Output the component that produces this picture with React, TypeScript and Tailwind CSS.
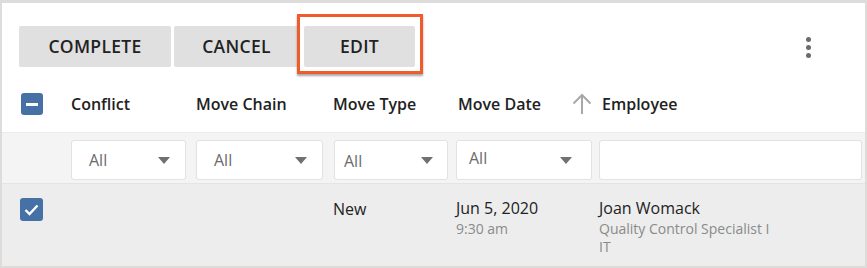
import React from 'react';

const Caret = () => (
  <svg width="12" height="7" viewBox="0 0 12 7" className="shrink-0">
    <path d="M0 0 L12 0 L6 7 Z" fill="#707070" />
  </svg>
);

const FilterSelect = ({ w, pl, pr, ty = 0 }: { w: string; pl: string; pr: string; ty?: number }) => (
  <div className={`${w} h-[40px] bg-white border border-[#e2e2e2] rounded-[3px] flex items-center justify-between ${pl} ${pr}`}>
    <span className="text-[16px] text-[#6b6b6b]" style={{ transform: `translateY(${ty}px)` }}>All</span>
    <Caret />
  </div>
);

export default function App() {
  const cols = 'grid grid-cols-[69px_125px_137px_123px_143px_1fr]';

  return (
    <div
      className="w-[867px] h-[268px] bg-white border-[#dedbdb] border-x-2 border-b-2 border-t-[3px] overflow-hidden text-[#222]"
      style={{ fontFamily: '"Open Sans", "Liberation Sans", sans-serif' }}
    >
      {/* toolbar */}
      <div className="relative flex items-center pt-[23px] pl-[17px] pr-[54px]">
        <button className="w-[152px] h-[41px] bg-[#e0e0e0] rounded-[2px] text-[17.5px] font-semibold tracking-[0.3px]">COMPLETE</button>
        <button className="ml-[3px] w-[125px] h-[41px] bg-[#e0e0e0] rounded-[2px] text-[17.5px] font-semibold tracking-[0.3px]">CANCEL</button>
        <button className="ml-[5px] w-[111px] h-[41px] bg-[#e0e0e0] rounded-[2px] text-[17.5px] font-semibold tracking-[0.3px]">EDIT</button>
        <div className="ml-auto flex flex-col items-center gap-[3px] pt-[2px]">
          <span className="w-[5px] h-[5px] rounded-full bg-[#6b6b6b]" />
          <span className="w-[5px] h-[5px] rounded-full bg-[#6b6b6b]" />
          <span className="w-[5px] h-[5px] rounded-full bg-[#6b6b6b]" />
        </div>
        {/* highlight annotation */}
        <div className="absolute left-[295px] top-[11px] w-[126px] h-[60px] border-[3px] border-[#f15a2b] shadow-[0_2px_2px_rgba(0,0,0,0.35)] pointer-events-none" />
      </div>

      {/* header row */}
      <div className={`${cols} items-center h-[38px] mt-[18px] mb-[9px] text-[16px] font-semibold`}>
        <div className="pl-[19px]">
          <div className="w-[22px] h-[22px] rounded-[3px] bg-[#4571a7] flex items-center justify-center">
            <span className="w-[12px] h-[3px] bg-white" />
          </div>
        </div>
        <div>Conflict</div>
        <div>Move Chain</div>
        <div>Move Type</div>
        <div className="flex items-center justify-between pl-[2px] pr-[7px]">
          <span>Move Date</span>
          <svg width="20" height="22" viewBox="0 0 20 22" fill="none" stroke="#a8a8a8" strokeWidth="2">
            <path d="M10 21 V2" />
            <path d="M1.5 10.5 L10 2 L18.5 10.5" />
          </svg>
        </div>
        <div className="pl-[3px]">Employee</div>
      </div>

      {/* filter row */}
      <div className={`${cols} bg-[#f4f4f4] border-t border-[#ebebeb] border-b border-b-[#e4e4e4] pt-[7px] pb-[3px]`}>
        <div />
        <FilterSelect w="w-[115px]" pl="pl-[17px]" pr="pr-[15px]" />
        <FilterSelect w="w-[127px]" pl="pl-[17px]" pr="pr-[15px]" />
        <div className="pl-[1px]">
          <FilterSelect w="w-[114px]" pl="pl-[9px]" pr="pr-[14px]" ty={1} />
        </div>
        <FilterSelect w="w-[136px]" pl="pl-[12px]" pr="pr-[19px]" ty={-2} />
        <div className="pr-[3px]">
          <div className="h-[40px] bg-white border border-[#e2e2e2] rounded-[3px]" />
        </div>
      </div>

      {/* data row */}
      <div className={`${cols} bg-[#ededed] h-[82px] pt-[13px]`}>
        <div className="pl-[18px]">
          <div className="w-[23px] h-[23px] rounded-[3px] bg-[#4571a7] flex items-center justify-center mt-[1px]">
            <svg width="15" height="12" viewBox="0 0 15 12" fill="none" stroke="white" strokeWidth="2.4">
              <path d="M1.5 6 L5.5 10 L13.5 1.5" />
            </svg>
          </div>
        </div>
        <div />
        <div />
        <div className="text-[16px] leading-[24px]">New</div>
        <div>
          <div className="text-[16px] leading-[23px]">Jun 5, 2020</div>
          <div className="text-[14px] leading-[18px] text-[#8a8a8a]">9:30 am</div>
        </div>
        <div>
          <div className="text-[16px] leading-[23px]">Joan Womack</div>
          <div className="text-[14px] leading-[18px] text-[#8a8a8a]">Quality Control Specialist I</div>
          <div className="text-[14px] leading-[18px] text-[#8a8a8a]">IT</div>
        </div>
      </div>
    </div>
  );
}
